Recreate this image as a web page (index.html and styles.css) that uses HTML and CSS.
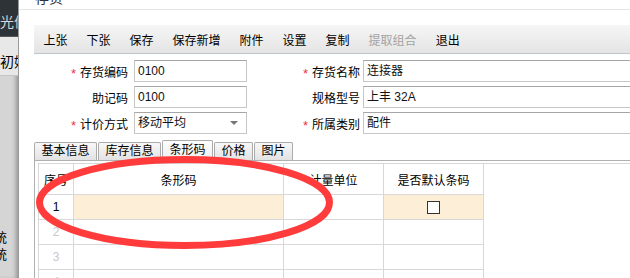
FILE: index.html
```html
<html>
  <head>
    <title>存货</title>
    <link rel="stylesheet" href="styles.css">
  </head>
  <body>
    <div class="side">
      <div class="side-top">光信</div>
      <div class="side-mid">初始</div>
      <div class="side-low">
        <div class="cut">统</div>
        <div class="cut">统</div>
      </div>
    </div>

    <div class="dialog">
      <div class="title"><span>存货</span></div>

      <div class="toolbar">
        <span class="tb">上张</span>
        <span class="tb">下张</span>
        <span class="tb">保存</span>
        <span class="tb">保存新增</span>
        <span class="tb">附件</span>
        <span class="tb">设置</span>
        <span class="tb">复制</span>
        <span class="tb off">提取组合</span>
        <span class="tb">退出</span>
      </div>

      <div class="form">
        <div class="lbl first"><i class="req">*</i>存货编码</div>
        <div class="field">0100</div>
        <div class="lbl"><i class="req">*</i>存货名称</div>
        <div class="field wide">连接器</div>

        <div class="lbl first">助记码</div>
        <div class="field">0100</div>
        <div class="lbl">规格型号</div>
        <div class="field wide">上丰 32A</div>

        <div class="lbl first"><i class="req">*</i>计价方式</div>
        <div class="field select"><span>移动平均</span><i class="arrow"></i></div>
        <div class="lbl"><i class="req">*</i>所属类别</div>
        <div class="field wide">配件</div>
      </div>

      <div class="tabs">
        <span class="tab">基本信息</span>
        <span class="tab">库存信息</span>
        <span class="tab active">条形码</span>
        <span class="tab">价格</span>
        <span class="tab">图片</span>
      </div>

      <div class="panel">
        <div class="grid-wrap">
          <div class="grid">
            <div class="hd">序号</div>
            <div class="hd">条形码</div>
            <div class="hd">计量单位</div>
            <div class="hd">是否默认条码</div>

            <div class="num">1</div>
            <div class="cell sel"></div>
            <div class="cell"></div>
            <div class="cell sel"><span class="check"></span></div>

            <div class="num dim">2</div>
            <div class="cell"></div>
            <div class="cell"></div>
            <div class="cell"></div>

            <div class="num dim">3</div>
            <div class="cell"></div>
            <div class="cell"></div>
            <div class="cell"></div>

            <div class="num dim">4</div>
            <div class="cell"></div>
            <div class="cell"></div>
            <div class="cell"></div>
          </div>
        </div>
      </div>
    </div>

    <svg class="mark" width="630" height="278" viewBox="0 0 630 278">
      <ellipse cx="184.5" cy="202.5" rx="145" ry="43" fill="none" stroke="#ff3b3b" stroke-width="7"/>
    </svg>
  </body>
</html>
```

FILE: styles.css
```css
html, body { margin: 0; height: 278px; overflow: hidden; }
body { display: flex; font: normal 12px "Liberation Sans", "Noto Sans CJK SC", sans-serif; color: #000; background: #fff; position: relative; }

/* app behind the dialog */
.side { width: 18px; flex: none; background: #d5d5d5; display: flex; flex-direction: column; box-shadow: inset -4px 0 4px -2px rgba(0,0,0,.3); overflow: hidden; }
.side-top { height: 36px; background: #2e3338; color: #d6d8da; font-size: 14px; line-height: 44px; white-space: nowrap; border-bottom: 1px solid #555; }
.side-mid { height: 38px; background: #e8e8e8; font-size: 14px; line-height: 50px; white-space: nowrap; border-bottom: 1px solid #c4c4c4; }
.side-low { padding-top: 153px; }
.cut { margin-left: -6px; font-size: 13px; line-height: 17px; }

/* dialog */
.dialog { width: 650px; flex: none; border-left: 1px solid #9a9a9a; padding-left: 15px; }
.title { height: 9px; overflow: hidden; border-bottom: 1px solid #e4e4e4; margin-left: -15px; padding-left: 16px; }
.title span { display: block; margin-top: -10px; font-size: 14px; line-height: 16px; color: #333; }

.toolbar { margin-top: 15px; height: 23px; padding-top: 5px; display: flex; background: linear-gradient(#f6f6f6, #e4e4e4); border-bottom: 1px solid #bcc6cc; }
.tb { padding: 0 9.5px; line-height: 23px; font-size: 12px; }
.tb.off { color: #a3a3a3; }

.form { margin-top: 6px; display: grid; grid-template-columns: 97px 113px 110px 1fr; grid-auto-rows: 22px; column-gap: 3px; row-gap: 4px; }
.lbl { display: flex; justify-content: flex-end; align-items: center; white-space: nowrap; }
.lbl.first { padding-right: 3px; }
.req { font-style: normal; color: #f0304a; font-size: 13px; margin-right: 4px; position: relative; top: 2px; }
.field { border: 1px solid #c6c6c6; border-top-color: #a6a6a6; padding: 0 3px; line-height: 20px; color: #111; white-space: nowrap; }
.select { display: flex; align-items: center; }
.arrow { margin-left: auto; margin-right: 5px; width: 0; height: 0; border-left: 4px solid transparent; border-right: 4px solid transparent; border-top: 4px solid #777; }

.tabs { margin-top: 6px; height: 20px; display: flex; align-items: flex-end; gap: 1px; }
.tab { height: 17px; line-height: 17px; padding: 0 6.5px; border: 1px solid #ababab; border-bottom: none; border-radius: 2px 2px 0 0; background: linear-gradient(#f8f8f8, #e2e2e2); }
.tab.active { height: 19px; line-height: 19px; background: linear-gradient(#fdfdfd, #efefef); }

.panel { border-top: 1px solid #b0b0b0; border-left: 1px solid #b0b0b0; padding: 2px 0 0 3px; }
.grid-wrap { border-top: 1px solid #d8d8d8; }
.grid { display: grid; grid-template-columns: 35px 210px 100px 100px; grid-template-rows: 31px; grid-auto-rows: 25px; width: 445px; border-left: 1px solid #d8d8d8; }
.grid > div { border-right: 1px solid #d8d8d8; border-bottom: 1px solid #d8d8d8; display: flex; align-items: center; justify-content: center; }
.hd { font-size: 12px; }
.num { font-size: 12px; }
.num.dim { color: #c8c8c8; }
.sel { background: #fdeed8; }
.check { width: 11px; height: 11px; border: 1px solid #333; background: #fff; }

/* annotation drawn over the screenshot */
.mark { position: absolute; left: 0; top: 0; pointer-events: none; }
```
